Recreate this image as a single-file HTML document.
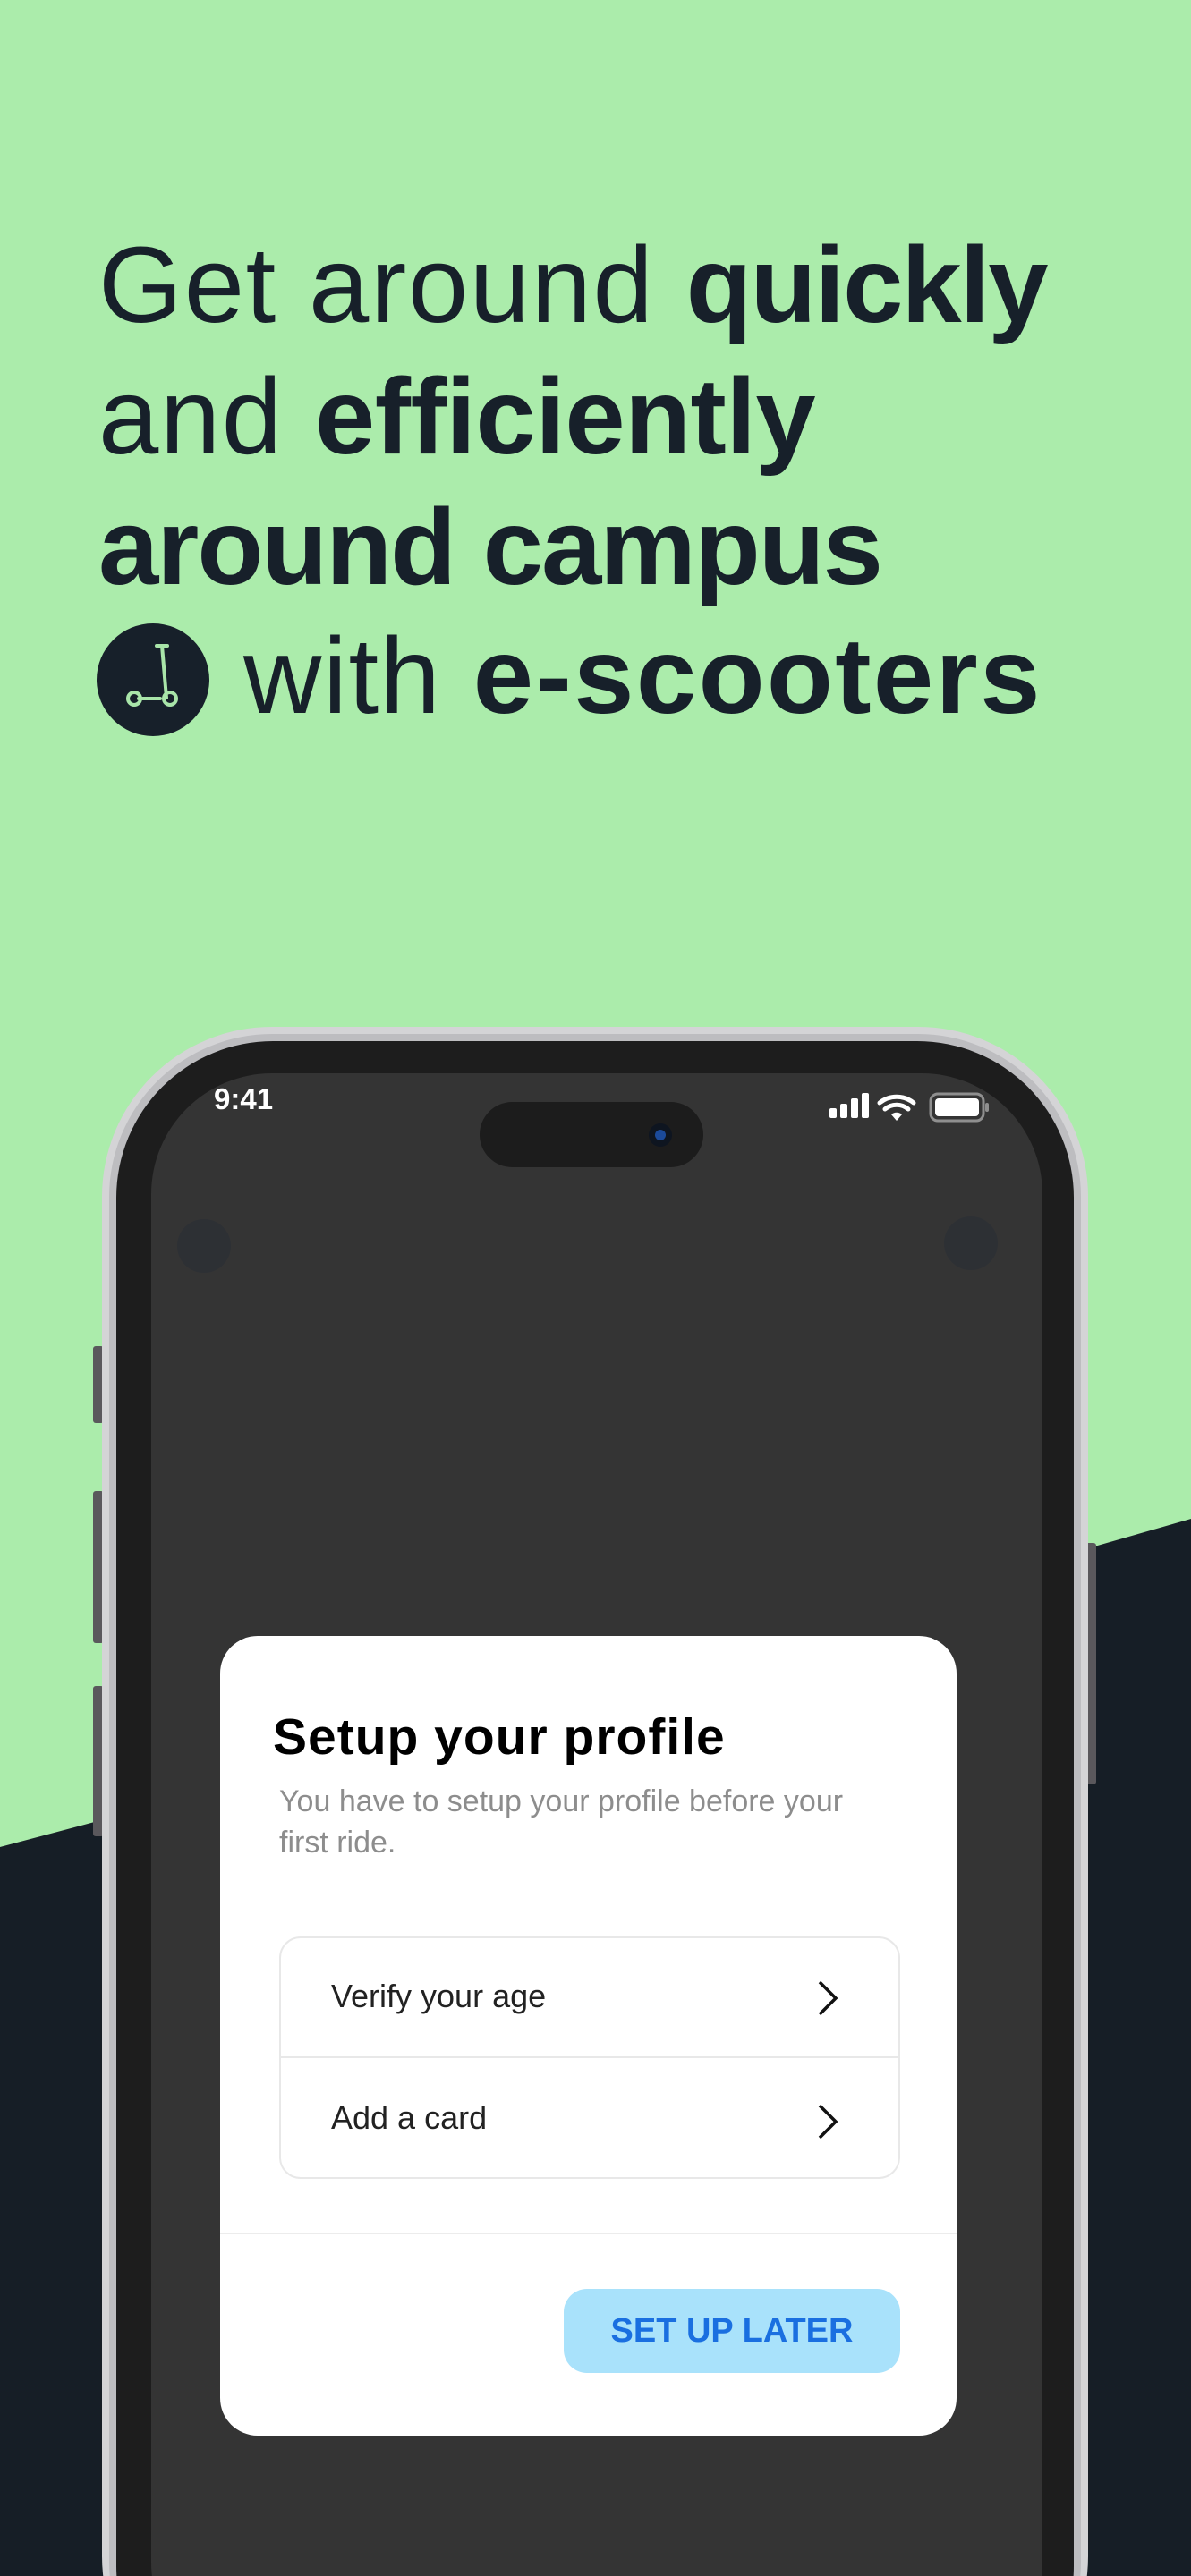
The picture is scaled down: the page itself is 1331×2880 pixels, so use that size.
<!DOCTYPE html>
<html><head><meta charset="utf-8">
<style>
*{margin:0;padding:0;box-sizing:border-box}
html,body{width:1331px;height:2880px;overflow:hidden}
body{background:#abecab;position:relative;font-family:"Liberation Sans",sans-serif}
.h{position:absolute;left:110px;font-size:121px;color:#17202a;letter-spacing:1.6px;white-space:nowrap;line-height:1}
.b{font-weight:bold;letter-spacing:-2px}
.abs{position:absolute}
svg{display:block}
</style></head><body>
<svg class="abs" style="left:0;top:0" width="1331" height="2880">
<path d="M0 2065 Q700 1880 1331 1698 L1331 2880 L0 2880Z" fill="#161e26"/>
<rect x="104" y="1505" width="12" height="86" rx="3" fill="#5a585c"/>
<rect x="104" y="1667" width="12" height="170" rx="3" fill="#5a585c"/>
<rect x="104" y="1885" width="12" height="168" rx="3" fill="#5a585c"/>
<rect x="1213" y="1725" width="12" height="270" rx="3" fill="#5a585c"/>
<rect x="114" y="1148" width="1102" height="1900" rx="190" fill="#d4d4d6"/>
<rect x="122" y="1156" width="1086" height="1890" rx="182" fill="#bdbdc0"/>
<rect x="130" y="1164" width="1070" height="1880" rx="175" fill="#1d1d1d"/>
<rect x="169" y="1200" width="996" height="1800" rx="135" fill="#343434"/>
<circle cx="228" cy="1393" r="30" fill="#2a2e36" opacity=".6"/>
<circle cx="1085" cy="1390" r="30" fill="#2a2e36" opacity=".6"/>
<rect x="536" y="1232" width="250" height="73" rx="36.5" fill="#1c1c1c"/>
<circle cx="738" cy="1269" r="13" fill="#0e1520"/>
<circle cx="738" cy="1269" r="6" fill="#1b4a9a"/>
<rect x="927" y="1239" width="8" height="11" rx="2" fill="#fff"/>
<rect x="939" y="1234" width="8" height="16" rx="2" fill="#fff"/>
<rect x="951" y="1228" width="8" height="22" rx="2" fill="#fff"/>
<rect x="963" y="1222" width="8" height="28" rx="2" fill="#fff"/>
<path d="M983 1233 a30 30 0 0 1 38 0 M989 1240 a20 20 0 0 1 26 0" stroke="#fff" stroke-width="5" fill="none" stroke-linecap="round"/>
<path d="M996 1246 l6 7 l6 -7 a9 9 0 0 0 -12 0z" fill="#fff"/>
<rect x="1040" y="1223" width="59" height="30" rx="8" fill="none" stroke="#8f8f8f" stroke-width="3"/>
<rect x="1045" y="1228" width="49" height="20" rx="4" fill="#fff"/>
<rect x="1101" y="1233" width="4" height="10" rx="2" fill="#8f8f8f"/>
<circle cx="171" cy="760" r="63" fill="#17202a"/>
<g stroke="#a9e5a9" stroke-width="4" fill="none" stroke-linecap="round">
<path d="M175 722 h12 M181 722 L186 780 M155 781 h24"/>
<circle cx="150" cy="781" r="7"/><circle cx="190" cy="781" r="7"/>
</g>
</svg>
<div class="h" style="top:258px">Get around <span class="b">quickly</span></div>
<div class="h" style="top:405px">and <span class="b" style="letter-spacing:-0.5px">efficiently</span></div>
<div class="h b" style="top:551px">around campus</div>
<div class="h" style="top:695px;left:272px">with <span class="b" style="letter-spacing:2.4px">e-scooters</span></div>
<div class="abs" style="left:239px;top:1210px;color:#fff;font-weight:bold;font-size:33px">9:41</div>

<div class="abs" style="left:246px;top:1829px;width:823px;height:894px;background:#fff;border-radius:42px">
 <div class="abs" style="left:59px;top:80px;font-size:57px;font-weight:bold;color:#000;letter-spacing:1px">Setup your profile</div>
 <div class="abs" style="left:66px;top:162px;width:660px;font-size:34px;line-height:46px;color:#8d8d8d">You have to setup your profile before your first ride.</div>
 <div class="abs" style="left:66px;top:336px;width:694px;height:271px;border:2px solid #e8e8e8;border-radius:24px">
  <div class="abs" style="left:0;top:132px;width:690px;height:2px;background:#e8e8e8"></div>
  <div class="abs" style="left:56px;top:44px;font-size:36px;color:#222">Verify your age</div>
  <div class="abs" style="left:56px;top:180px;font-size:36px;color:#222">Add a card</div>
  <svg class="abs" style="left:596px;top:45px" width="30" height="44"><path d="M6 4 L24 22 L6 40" stroke="#111" stroke-width="3.5" fill="none"/></svg>
  <svg class="abs" style="left:596px;top:183px" width="30" height="44"><path d="M6 4 L24 22 L6 40" stroke="#111" stroke-width="3.5" fill="none"/></svg>
 </div>
 <div class="abs" style="left:0;top:667px;width:823px;height:2px;background:#ececec"></div>
 <div class="abs" style="left:384px;top:730px;width:376px;height:94px;background:#a9e2fb;border-radius:26px;color:#1a6fe0;font-weight:bold;font-size:38px;text-align:center;line-height:94px">SET UP LATER</div>
</div>
</body></html>
